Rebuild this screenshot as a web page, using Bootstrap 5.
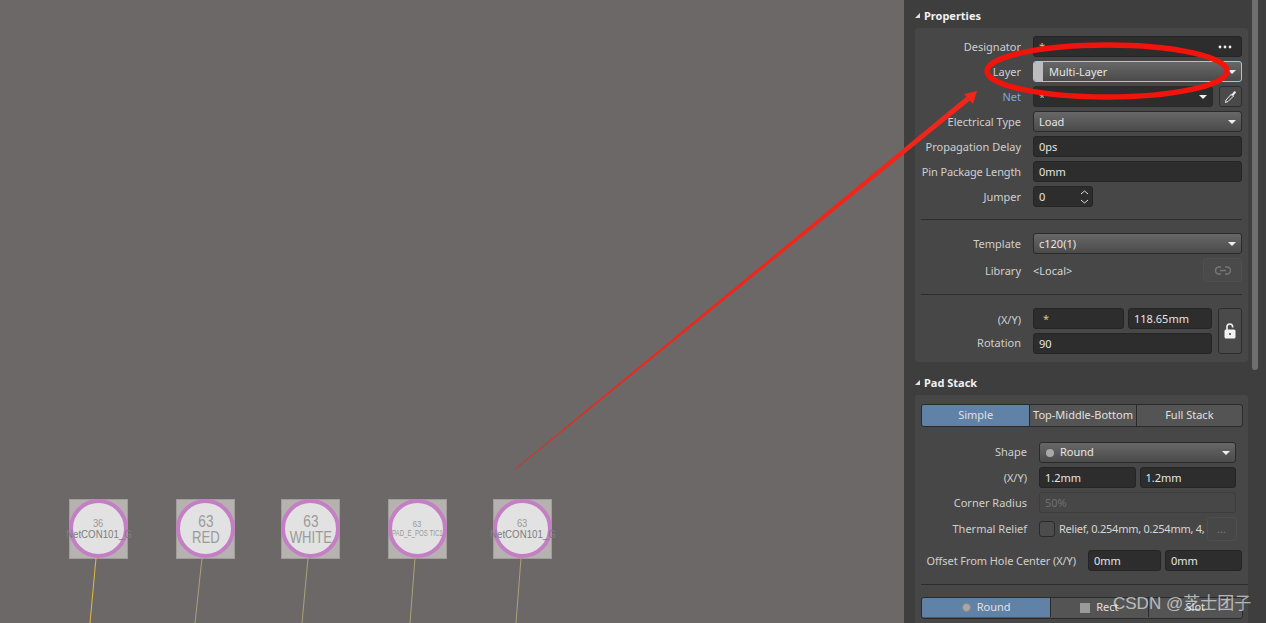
<!DOCTYPE html>
<html lang="en">
<head>
<meta charset="UTF-8">
<title>Pad Properties</title>
<link href="https://cdn.jsdelivr.net/npm/bootstrap@5.3.0/dist/css/bootstrap.min.css" rel="stylesheet">
<style>
html, body { height: 100%; margin: 0; overflow: hidden; background: #6c6867; }
.stage { position: relative; width: 1266px; height: 623px; overflow: hidden; }
.pcb-area { width: 904px; background: #6c6867; position: relative; flex: none; }
.pad-box { position: absolute; top: 499px; width: 59px; height: 60px; background: #b5b2af; border: 1px solid #a09d9a; }
.pad-ring { position: absolute; left: -1px; top: -1px; width: 59px; height: 59px; border-radius: 50%; background: #e2e2e2; border: 4px solid #c47fc4; display: flex; flex-direction: column; align-items: center; justify-content: center; color: #9a9a9a; font-family: "Liberation Sans", sans-serif; line-height: 1; white-space: nowrap; padding-top: 3px; }
.pad-num { font-size: 16px; transform: scaleX(.85); }
.pad-name { font-size: 16px; transform: scaleX(.82); }
.pad-ring.tiny { padding-top: 1px; }
.pad-ring.tiny .pad-num { font-size: 11px; margin-bottom: 1px; }
.pad-ring.tiny .pad-name { font-size: 10px; color: #7d7d7d; transform: scaleX(.97); }
.pad-ring.micro { padding-top: 0; }
.pad-ring.micro .pad-num { font-size: 9px; }
.pad-ring.micro .pad-name { font-size: 9px; transform: scaleX(.68); }
.overlay-svg { position: absolute; left: 0; top: 0; pointer-events: none; }
.watermark { position: absolute; left: 1113px; top: 592px; font-family: "Liberation Sans", "Noto Sans CJK SC", sans-serif; font-size: 17px; line-height: 24px; color: rgba(255,255,255,.62); white-space: nowrap; }

.side-panel { width: 362px; height: 623px; background: #3e3e3e; color: #d6d6d6; font-family: "Noto Sans", sans-serif; font-size: 11px; flex: none; position: relative; padding: 0 18px 0 11px; overflow: hidden; }
.side-scroll { position: absolute; left: 348px; top: 0; width: 6px; height: 370px; background: #6f6f6f; border-radius: 0 0 3px 3px; }
.sec-title { height: 28px; padding-top: 2px; font-weight: 700; color: #f0f0f0; line-height: 15px; display: flex; align-items: center; gap: 4px; }
.sec-title::before { content: ""; width: 0; height: 0; border-left: 5px solid transparent; border-bottom: 5px solid #e0e0e0; }
.sec-title.sec-two { height: 33px; padding-top: 7px; }
.sec-body { background: #474747; border-radius: 3px; padding: 8px 6px; }
.sec-body.sec-stack { height: 240px; padding: 9px 0 0 6px; }
.f-row { display: flex; align-items: center; height: 21px; margin-bottom: 4px; gap: 6px; }
.f-row.row-tall { height: 24px; }
.f-row.row-offset { margin-top: 9px; }
.f-label { width: 100px; flex: none; margin-right: 6px; color: #cfcfcf; white-space: nowrap; display: flex; justify-content: flex-end; padding-top: 1px; }
.f-label.net { color: #7ea7dc; }
.f-label.pad-label { width: 106px; }
.f-label.offset-label { width: 155px; letter-spacing: -.08px; }
.f-label.tight { letter-spacing: -.12px; }
.f-label.low { padding-top: 3px; }
.f-label.high { padding-top: 0; }
.f-field { flex: 1 1 0; min-width: 0; height: 21px; background: #2d2d2d; border: 1px solid #252525; border-radius: 3px; padding: 1px 5px 0; display: flex; align-items: center; color: #e6e6e6; white-space: nowrap; position: relative; }
.f-field.f-high { padding-top: 0; }
.f-drop { background: linear-gradient(#676767, #4b4b4b); border-color: #2a2a2a; }
.f-drop::after { content: ""; position: absolute; right: 5px; top: 8px; border-left: 4.5px solid transparent; border-right: 4.5px solid transparent; border-top: 4px solid #efefef; }
.f-drop.f-dark { background: #2d2d2d; }
.f-focus { border-color: #a3c5ec; padding-left: 0; }
.layer-chip { width: 9px; height: 19px; margin-top: -1px; background: #bdbdbd; border-radius: 2px 0 0 2px; margin-right: 6px; }
.f-star { color: #d8c98c; }
.f-btn { height: 21px; width: 23px; flex: none; background: #4a4a4a; border: 1px solid #2c2c2c; border-radius: 3px; display: flex; align-items: center; justify-content: center; }
.f-spin { flex: none; width: 60px; }
.f-xfix { flex: 0 0 91px; padding-left: 9px; }
.f-next { margin-left: -2px; }
.f-inset { margin-right: 12px; }
.f-offset { flex: 0 0 73px; }
.f-inset-sm { margin-right: 6px; }
.spin-svg { position: absolute; right: 3px; top: 2px; }
.f-rule { border-top: 1px solid #2d2d2d; margin: 12px 0 13px 0; }
.f-rule.rule-wide { margin: 13px 0 12px 0; }
.lib-text { padding-top: 3px; }
.lib-btn { width: 39px; height: 24px; border: 1px solid #4f4f4f; background: #4a4a4a; border-radius: 3px; margin-left: auto; display: flex; align-items: center; justify-content: center; }
.xy-block { gap: 6px; }
.f-lock { width: 24px; height: 46px; flex: none; background: #4a4a4a; border: 1px solid #2c2c2c; border-radius: 3px; display: flex; align-items: center; justify-content: center; }
.f-disabled { background: #474747; border-color: #3d3d3d; color: #6f6f6f; }
.seg-bar { display: flex; width: 322px; height: 23px; border: 1px solid #2a2a2a; border-radius: 3px; overflow: hidden; background: #545454; }
.seg-bar.seg-low { height: 22px; padding-bottom: 1px; }
.seg-gap { height: 15px; }
.seg-item { display: flex; align-items: center; justify-content: center; gap: 6px; border-left: 1px solid #2a2a2a; color: #e0e0e0; white-space: nowrap; }
.seg-item:first-child { border-left: 0; }
.seg-on { background: #5f82a6; }
.seg-bar.seg-low { background: #545454; }
.w-108 { width: 108px; } .w-107 { width: 107px; } .w-129 { width: 129px; } .w-98 { width: 98px; } .w-95 { width: 95px; }
.seg-dot { width: 9px; height: 9px; border-radius: 50%; background: #a8a8a8; border: 1px solid #888; }
.seg-sq { width: 10px; height: 10px; background: #9a9a9a; }
.dot-small { width: 8px; height: 8px; border-radius: 50%; background: #a9a9a9; margin-right: 6px; margin-left: 1px; flex: none; }
.check-box { width: 16px; height: 16px; flex: none; background: #4c4c4c; border: 1px solid #2a2a2a; border-radius: 3px; margin-right: -2px; }
.relief-text { white-space: nowrap; padding-top: 1px; letter-spacing: -.25px; }
.dots-btn { width: 30px; height: 24px; flex: none; margin-left: -4px; border: 1px solid #4f4f4f; border-radius: 3px; color: #777; display: flex; align-items: center; justify-content: center; }
</style>
</head>
<body>
<div class="stage d-flex">
  <div class="pcb-area">
    <div class="pad-box" style="left:69px"><div class="pad-ring tiny"><span class="pad-num">36</span><span class="pad-name">NetCON101_G</span></div></div>
    <div class="pad-box" style="left:176px"><div class="pad-ring"><span class="pad-num">63</span><span class="pad-name">RED</span></div></div>
    <div class="pad-box" style="left:281px"><div class="pad-ring"><span class="pad-num">63</span><span class="pad-name">WHITE</span></div></div>
    <div class="pad-box" style="left:388px"><div class="pad-ring micro"><span class="pad-num">63</span><span class="pad-name">PAD_E_POS TIC1</span></div></div>
    <div class="pad-box" style="left:493px"><div class="pad-ring tiny"><span class="pad-num">63</span><span class="pad-name">NetCON101_G</span></div></div>
  </div>

  <div class="side-panel">
    <div class="side-scroll"></div>
    <div class="sec-title">Properties</div>
    <div class="sec-body">
      <div class="f-row"><span class="f-label">Designator</span><div class="f-field"><span class="f-star">*</span><svg class="ms-auto me-1" width="14" height="4" viewBox="0 0 14 4"><circle cx="2" cy="2" r="1.4" fill="#eee"/><circle cx="7" cy="2" r="1.4" fill="#eee"/><circle cx="12" cy="2" r="1.4" fill="#eee"/></svg></div></div>
      <div class="f-row"><span class="f-label">Layer</span><div class="f-field f-drop f-focus"><span class="layer-chip"></span>Multi-Layer</div></div>
      <div class="f-row"><span class="f-label net">Net</span><div class="f-field f-drop f-dark"><span class="f-star">*</span></div>
        <div class="f-btn"><svg width="13" height="14" viewBox="0 0 13 14"><path d="M1.500 12.500l.5-2.500 5-5.500 2 2-5 5z" fill="none" stroke="#eee" stroke-width="1"/><path d="M6.500 3.500l1.500.5 2-2.500c1-.9 2.500.5 1.600 1.600L9.500 5.500l.5 1.500z" fill="#eee"/></svg></div></div>
      <div class="f-row"><span class="f-label">Electrical Type</span><div class="f-field f-drop">Load</div></div>
      <div class="f-row"><span class="f-label">Propagation Delay</span><div class="f-field">0ps</div></div>
      <div class="f-row"><span class="f-label tight">Pin Package Length</span><div class="f-field">0mm</div></div>
      <div class="f-row"><span class="f-label">Jumper</span><div class="f-field f-spin">0<svg class="spin-svg" width="9" height="16" viewBox="0 0 9 16"><path d="M1 5l3.500-3L8 5M1 11l3.500 3L8 11" fill="none" stroke="#ddd" stroke-width="1"/></svg></div></div>
      <div class="f-rule"></div>
      <div class="f-row"><span class="f-label">Template</span><div class="f-field f-drop">c120(1)</div></div>
      <div class="f-row row-tall"><span class="f-label low">Library</span><span class="lib-text">&lt;Local&gt;</span>
        <div class="lib-btn"><svg width="16" height="9" viewBox="0 0 16 9"><path d="M6 1H4a3.500 3.500 0 0 0 0 7h2M10 1h2a3.500 3.500 0 0 1 0 7h-2M5 4.500h6" fill="none" stroke="#777" stroke-width="1.600"/></svg></div></div>
      <div class="f-rule"></div>
      <div class="d-flex xy-block">
        <div class="flex-grow-1">
          <div class="f-row"><span class="f-label low">(X/Y)</span><div class="f-field f-xfix"><span class="f-star">*</span></div><div class="f-field f-next">118.65mm</div></div>
          <div class="f-row mb-0"><span class="f-label high">Rotation</span><div class="f-field">90</div></div>
        </div>
        <div class="f-lock"><svg width="12" height="16" viewBox="0 0 12 16"><path d="M3 7V3.800a2.800 2.800 0 0 1 5.600 0V4.500" fill="none" stroke="#f2f2f2" stroke-width="1.600"/><rect x="0.500" y="6.500" width="11" height="9" rx="1.500" fill="#f2f2f2"/><circle cx="6" cy="11" r="1.100" fill="#4a4a4a"/></svg></div>
      </div>
    </div>

    <div class="sec-title sec-two">Pad Stack</div>
    <div class="sec-body sec-stack">
      <div class="seg-bar">
        <div class="seg-item seg-on w-108">Simple</div>
        <div class="seg-item w-107">Top-Middle-Bottom</div>
        <div class="seg-item w-107">Full Stack</div>
      </div>
      <div class="seg-gap"></div>
      <div class="f-row"><span class="f-label pad-label high">Shape</span><div class="f-field f-drop f-inset f-high"><span class="dot-small"></span>Round</div></div>
      <div class="f-row"><span class="f-label pad-label">(X/Y)</span><div class="f-field">1.2mm</div><div class="f-field f-next f-inset">1.2mm</div></div>
      <div class="f-row"><span class="f-label pad-label">Corner Radius</span><div class="f-field f-disabled f-inset">50%</div></div>
      <div class="f-row row-tall"><span class="f-label pad-label">Thermal Relief</span><span class="check-box"></span><span class="relief-text">Relief, 0.254mm, 0.254mm, 4,</span><span class="dots-btn">...</span></div>
      <div class="f-row row-offset"><span class="f-label offset-label">Offset From Hole Center (X/Y)</span><div class="f-field f-offset">0mm</div><div class="f-field f-next f-inset-sm">0mm</div></div>
      <div class="f-rule rule-wide"></div>
      <div class="seg-bar seg-low">
        <div class="seg-item seg-on w-129"><span class="seg-dot"></span>Round</div>
        <div class="seg-item w-98"><span class="seg-sq"></span>Rect</div>
        <div class="seg-item w-95">Slot</div>
      </div>
    </div>
  </div>

  <svg class="overlay-svg" width="1266" height="623" viewBox="0 0 1266 623">
    <line x1="96" y1="558" x2="90" y2="623" stroke="#e3b93c" stroke-width="1"/>
    <line x1="202" y1="558" x2="195" y2="623" stroke="#a8a27a" stroke-width="1"/>
    <line x1="308" y1="558" x2="302" y2="623" stroke="#a8a27a" stroke-width="1"/>
    <line x1="415" y1="558" x2="410" y2="623" stroke="#a8a27a" stroke-width="1"/>
    <line x1="521" y1="558" x2="516" y2="623" stroke="#a8a27a" stroke-width="1"/>
    <polygon points="515,469 966.500,96.500 970,100.500 516,469" fill="#f0261a"/>
    <polygon points="977,91 964,94 973,104" fill="#f0261a"/>
    <ellipse cx="1107" cy="71" rx="120" ry="26" fill="none" stroke="#f0140c" stroke-width="5.500"/>
  </svg>
  <div class="watermark">CSDN @芝士团子</div>
</div>
<script src="https://cdn.jsdelivr.net/npm/bootstrap@5.3.0/dist/js/bootstrap.bundle.min.js"></script>
</body>
</html>
